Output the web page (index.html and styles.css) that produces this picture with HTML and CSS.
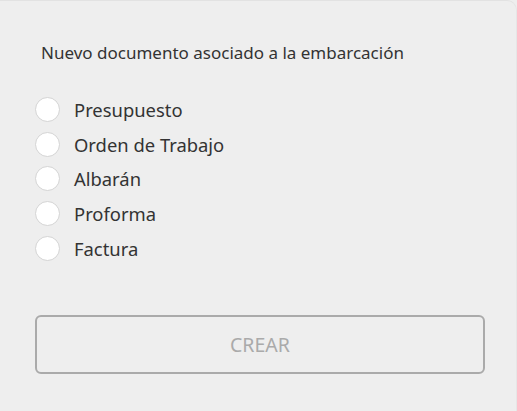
FILE: index.html
```html
<!DOCTYPE html>
<html lang="es">
<head>
<meta charset="utf-8">
<link rel="stylesheet" href="styles.css">
</head>
<body>
<div class="card">
  <p class="title">Nuevo documento asociado a la embarcación</p>
  <ul class="options">
    <li class="option"><span class="radio"></span><span class="label">Presupuesto</span></li>
    <li class="option"><span class="radio"></span><span class="label">Orden de Trabajo</span></li>
    <li class="option"><span class="radio"></span><span class="label">Albarán</span></li>
    <li class="option"><span class="radio"></span><span class="label">Proforma</span></li>
    <li class="option"><span class="radio"></span><span class="label">Factura</span></li>
  </ul>
  <button class="btn" type="button">CREAR</button>
</div>
</body>
</html>
```
FILE: styles.css
```css
html, body {
  margin: 0;
  padding: 0;
  background: #eeeeee;
}
body {
  width: 517px;
  height: 411px;
  overflow: hidden;
  font-family: "Noto Sans", "Open Sans", sans-serif;
  color: #333333;
}
.card {
  box-sizing: border-box;
  width: 517px;
  height: 411px;
  background: #eeeeee;
  border-top: 1px solid #e2e2e2;
  border-right: 1px solid #e6e6e6;
  border-radius: 0 10px 0 0;
  padding: 42px 32px 0 35px;
  display: flex;
  flex-direction: column;
}
.title {
  margin: 0 0 0 6px;
  font-size: 17px;
  line-height: 20px;
  color: #333333;
}
.options {
  list-style: none;
  margin: 29px 0 0 0;
  padding: 0;
  display: flex;
  flex-direction: column;
}
.option {
  height: 34.75px;
  display: flex;
  align-items: center;
  gap: 14px;
}
.radio {
  box-sizing: border-box;
  width: 25px;
  height: 25px;
  border-radius: 50%;
  background: #ffffff;
  border: 1.5px solid #d4d4d4;
  flex: none;
}
.label {
  font-size: 18.4px;
  color: #333333;
}
.btn {
  margin-top: 49px;
  box-sizing: border-box;
  width: 450px;
  height: 59px;
  border: 2.5px solid #aaaaaa;
  border-radius: 6px;
  background: transparent;
  color: #aaaaaa;
  font-family: "Noto Sans", "Open Sans", sans-serif;
  font-size: 19.5px;
  padding: 0;
}
```
